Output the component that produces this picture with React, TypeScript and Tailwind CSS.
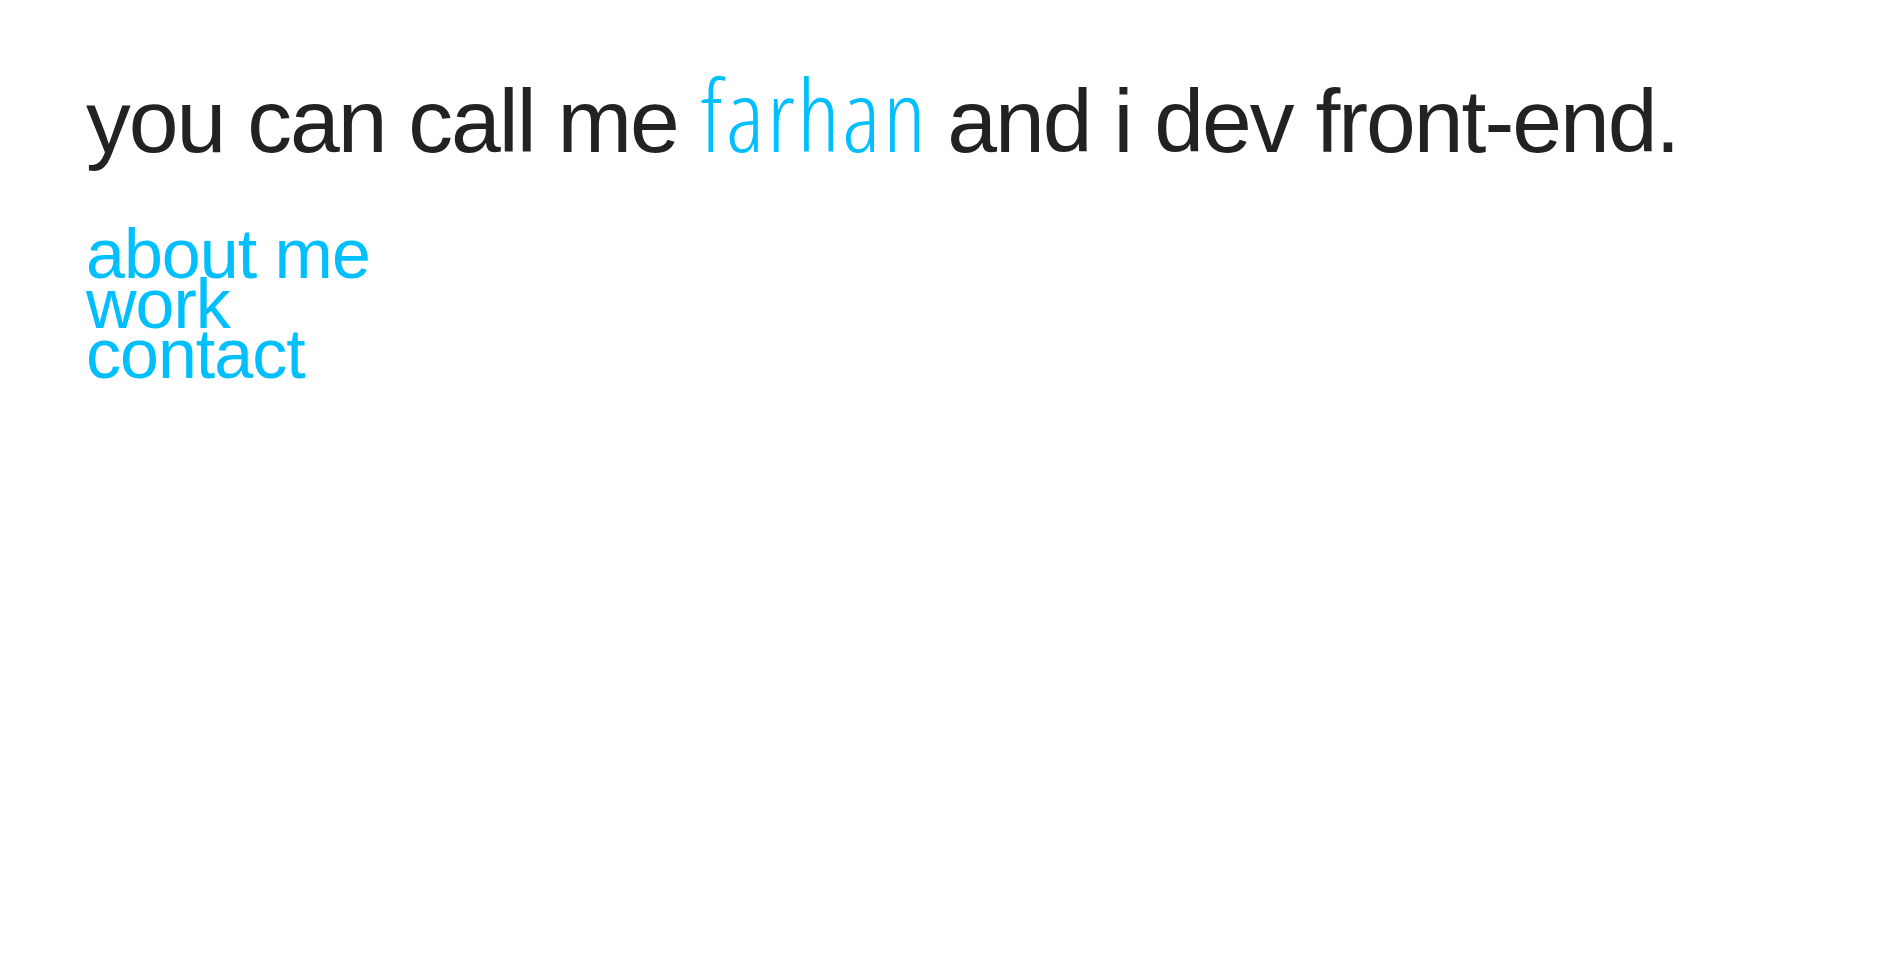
export default function App() {
  return (
    <div className="min-h-screen bg-white px-[86px] pt-[77px] font-['Liberation_Sans',Arial,sans-serif]">
      <h1 className="whitespace-nowrap text-[89.5px] leading-[89.5px] font-normal tracking-[-2px] text-[#222222]">
        you can call me{" "}
        <span className="mr-[-4px] font-['Open_Sans',sans-serif] text-[100px] leading-[0] font-light tracking-[2.5px] text-[#00bfff] [font-stretch:75%]">
          farhan
        </span>{" "}
        and i dev front-end.
      </h1>
      <nav className="mt-[62.5px] flex flex-col text-[70px] leading-[50px] tracking-[-1px] text-[#00bfff]">
        <a href="#">about me</a>
        <a href="#">work</a>
        <a href="#">contact</a>
      </nav>
    </div>
  );
}
